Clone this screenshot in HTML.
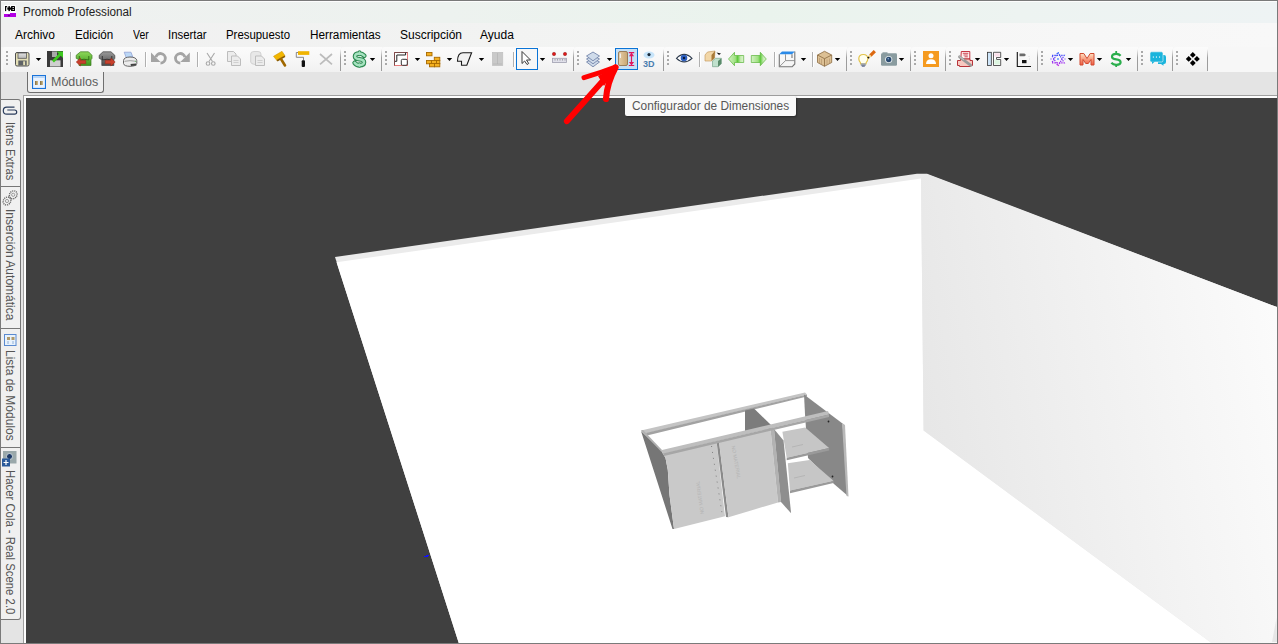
<!DOCTYPE html>
<html><head><meta charset="utf-8">
<style>
html,body{margin:0;padding:0}
body{width:1278px;height:644px;overflow:hidden;position:relative;background:#f7f7f7;font-family:"Liberation Sans",sans-serif;}
.a{position:absolute}
.t12{font-size:12px;line-height:12px;white-space:nowrap;color:#000}
.band{position:absolute;top:47px;height:25px;background:linear-gradient(#fbfbfb,#f6f6f6 60%,#f1f1f1);border-top-left-radius:3px}
.band:after{content:"";position:absolute;right:0;top:2px;width:1px;height:22px;background:linear-gradient(rgba(150,150,150,0),#9c9c9c 40%,#9c9c9c)}
.grip{position:absolute;top:4px;left:3px;width:2px;height:14px;background:repeating-linear-gradient(#a9a9a9 0 2px,transparent 2px 4px)}
.sep{position:absolute;top:52px;width:1px;height:15px;background:#b4b4b4}
.dd{position:absolute;top:58px;width:0;height:0;border-left:2.5px solid transparent;border-right:2.5px solid transparent;border-top:3px solid #000}
.ic{position:absolute;top:51px;width:16px;height:16px}
.vt{position:absolute;left:1px;width:20px;background:#f0f0f0;border:1px solid #767676;border-left:none;box-sizing:border-box}
.vtx{position:absolute;font-size:12px;line-height:12px;color:#555;white-space:nowrap;transform-origin:0 0}
</style></head><body>

<!-- title bar -->
<div class="a" style="left:1px;top:1px;width:1276px;height:22px;background:linear-gradient(90deg,#eff1f0,#edf2ef 35%,#eaf3ed 60%,#edf3f1 80%,#eef3f4 100%)"></div>
<div class="a" style="left:1px;top:1px;width:1276px;height:1px;background:#fdfdfd"></div>
<!-- app icon -->
<svg class="a" style="left:0;top:0" width="20" height="20" viewBox="0 0 20 20">
<rect x="4" y="5" width="12" height="12" fill="#fff"/>
<g fill="#000">
<rect x="5" y="6.1" width="1.2" height="5"/><rect x="5" y="6.1" width="2.2" height="1.1"/>
<rect x="7.3" y="7.5" width="3.8" height="2.2"/><rect x="8.4" y="6.1" width="1.5" height="5"/>
<rect x="11" y="6.1" width="4" height="4.9" rx=".6"/>
</g>
<rect x="12.6" y="7" width="1.2" height="1" fill="#fff"/><rect x="12.6" y="9" width="1.2" height="1" fill="#fff"/>
<path d="M4 13.9 H10 V12.9 H16 V17 H4 Z" fill="#b400e6"/>
<ellipse cx="9" cy="15.6" rx="1.3" ry=".8" fill="#6a0090"/>
</svg>
<div class="a t12" style="left:23px;top:6px;color:#222;transform:scaleX(0.975);transform-origin:0 0">Promob Professional</div>

<!-- menu -->
<div class="a" style="left:1px;top:23px;width:1276px;height:24px;background:linear-gradient(90deg,#f0f0f0,#f2f3f2 40%,#f7f7f7 85%,#f8f8f8)"></div>
<div class="a t12" style="left:15px;top:29px">Archivo</div>
<div class="a t12" style="left:75px;top:29px;transform:scaleX(0.97);transform-origin:0 0">Edición</div>
<div class="a t12" style="left:133px;top:29px;transform:scaleX(0.87);transform-origin:0 0">Ver</div>
<div class="a t12" style="left:168px;top:29px;transform:scaleX(0.95);transform-origin:0 0">Insertar</div>
<div class="a t12" style="left:226px;top:29px;transform:scaleX(0.95);transform-origin:0 0">Presupuesto</div>
<div class="a t12" style="left:310px;top:29px;transform:scaleX(0.98);transform-origin:0 0">Herramientas</div>
<div class="a t12" style="left:400px;top:29px">Suscripción</div>
<div class="a t12" style="left:480px;top:29px">Ayuda</div>

<!-- toolbar bands -->
<div class="band" style="left:3px;width:338px"><div class="grip"></div></div>
<div class="band" style="left:341px;width:41px"><div class="grip"></div></div>
<div class="band" style="left:382px;width:192px"><div class="grip"></div></div>
<div class="band" style="left:574px;width:90px"><div class="grip"></div></div>
<div class="band" style="left:664px;width:183px"><div class="grip"></div></div>
<div class="band" style="left:847px;width:64px"><div class="grip"></div></div>
<div class="band" style="left:911px;width:35px"><div class="grip"></div></div>
<div class="band" style="left:946px;width:92px"><div class="grip"></div></div>
<div class="band" style="left:1038px;width:100px"><div class="grip"></div></div>
<div class="band" style="left:1138px;width:35px"><div class="grip"></div></div>
<div class="band" style="left:1173px;width:35px"><div class="grip"></div></div>

<!-- toolbar icons -->
<svg class="a" style="left:0;top:0" width="1278" height="95" viewBox="0 0 1278 95">
<defs>
<linearGradient id="gGreen" x1="0" y1="0" x2="0" y2="1"><stop offset="0" stop-color="#8ed85a"/><stop offset="1" stop-color="#3c9a1c"/></linearGradient>
<linearGradient id="gGray" x1="0" y1="0" x2="0" y2="1"><stop offset="0" stop-color="#9a9a9a"/><stop offset="1" stop-color="#4a4a4a"/></linearGradient>
<linearGradient id="gDoor" x1="0" y1="0" x2="1" y2="0"><stop offset="0" stop-color="#e6cda6"/><stop offset="1" stop-color="#c9a774"/></linearGradient>
<linearGradient id="gArrG" x1="0" y1="0" x2="1" y2="0"><stop offset="0" stop-color="#d4f2c4"/><stop offset=".45" stop-color="#9ee080"/><stop offset=".6" stop-color="#5cc83a"/><stop offset=".8" stop-color="#c4ecb0"/><stop offset="1" stop-color="#dcf4d0"/></linearGradient>
<linearGradient id="gM" x1="0" y1="0" x2="0" y2="1"><stop offset="0" stop-color="#ffe0c0"/><stop offset="1" stop-color="#f05a40"/></linearGradient>
<linearGradient id="gLbl" x1="0" y1="0" x2="0" y2="1"><stop offset="0" stop-color="#e2e2e2"/><stop offset="1" stop-color="#b8b8b8"/></linearGradient>
</defs>
<!-- dropdown arrows -->
<g fill="#000">
<path d="M35.8 58h5.4l-2.7 3z"/><path d="M369.8 58h5.4l-2.7 3z"/><path d="M414.8 58h5.4l-2.7 3z"/>
<path d="M446.8 58h5.4l-2.7 3z"/><path d="M478.8 58h5.4l-2.7 3z"/><path d="M539.8 58h5.4l-2.7 3z"/>
<path d="M606.8 58h5.4l-2.7 3z"/><path d="M800.8 58h5.4l-2.7 3z"/><path d="M834.8 58h5.4l-2.7 3z"/>
<path d="M898.8 58h5.4l-2.7 3z"/><path d="M974.8 58h5.4l-2.7 3z"/><path d="M1003.8 58h5.4l-2.7 3z"/>
<path d="M1067.8 58h5.4l-2.7 3z"/><path d="M1096.8 58h5.4l-2.7 3z"/><path d="M1125.8 58h5.4l-2.7 3z"/>
</g>
<!-- separators -->
<g fill="#ffffff">
<rect x="71" y="52" width="1" height="15"/><rect x="146" y="52" width="1" height="15"/><rect x="198" y="52" width="1" height="15"/>
<rect x="514" y="52" width="1" height="15"/><rect x="700" y="52" width="1" height="15"/><rect x="775" y="52" width="1" height="15"/>
<rect x="813" y="52" width="1" height="15"/>
</g>
<g fill="#b0b0b0">
<rect x="70" y="52" width="1" height="15"/><rect x="145" y="52" width="1" height="15"/><rect x="197" y="52" width="1" height="15"/>
<rect x="513" y="52" width="1" height="15"/><rect x="699" y="52" width="1" height="15"/><rect x="774" y="52" width="1" height="15"/>
<rect x="812" y="52" width="1" height="15"/>
</g>

<!-- save -->
<rect x="15.5" y="52.5" width="13.5" height="13.5" rx="1.5" fill="#e4dfb6" stroke="#505050" stroke-width="1"/>
<rect x="18" y="53" width="8.5" height="5.3" fill="url(#gLbl)" stroke="#5a5a5a" stroke-width=".8"/>
<rect x="18.3" y="60.5" width="8.4" height="5" fill="#5e6266"/>
<rect x="23.2" y="61.3" width="1.9" height="3.8" fill="#e4dfb6"/>
<!-- save as -->
<rect x="47" y="51" width="16" height="16" fill="#3a3a3a"/>
<rect x="52" y="51.5" width="5" height="5.5" fill="#a8a8a8"/>
<rect x="50" y="60.3" width="10.5" height="6.2" fill="#cfcfcf"/>
<path d="M53 61.5 L60.5 54" stroke="#3cc81e" stroke-width="2.6"/>
<path d="M56.5 51.5 L63 51.5 L63 58 Z" fill="#3cc81e"/>
<!-- green chair -->
<path d="M80.5 51.8 L88.5 51.8 L92 55.3 L92 58.3 L91 59.8 L91 65.5 L79 65.5 L79 59.8 L76.2 58.3 L76.2 55.3 Z" fill="url(#gGreen)" stroke="#3d7a22" stroke-width=".7" stroke-linejoin="round"/>
<path d="M79.3 56 L79.3 60 M88.8 56 L88.8 60 M79.3 60 Q84 58.5 88.8 60" stroke="#2e6a16" stroke-width=".9" fill="none"/>
<path d="M76.2 62 L80.5 58 L80.5 60.3 L85.8 60.3 L85.8 63.7 L80.5 63.7 L80.5 66 Z" fill="#c8402c" stroke="#9a2a1a" stroke-width=".5"/>
<!-- gray chair -->
<path d="M103 51.8 L111 51.8 L114.8 55.3 L114.8 58.3 L113.8 59.8 L113.8 65.5 L101.8 65.5 L101.8 59.8 L99.2 58.3 L99.2 55.3 Z" fill="url(#gGray)" stroke="#404040" stroke-width=".7" stroke-linejoin="round"/>
<path d="M102.3 56 L102.3 60 M111.8 56 L111.8 60 M102.3 60 Q107 58.5 111.8 60" stroke="#303030" stroke-width=".9" fill="none"/>
<path d="M115.2 62 L110.8 58 L110.8 60.3 L105.2 60.3 L105.2 63.7 L110.8 63.7 L110.8 66 Z" fill="#c8402c" stroke="#9a2a1a" stroke-width=".5"/>
<!-- printer -->
<path d="M124.2 52.2 L131 52.2 L132.8 57 L126.2 57.6 Z" fill="#bcd8f6" stroke="#8a9ad0" stroke-width=".7"/>
<path d="M123.5 60.5 Q123.8 57.2 130 57 Q136.5 57.2 136.8 60.5 L136.8 63.5 Q136 66.3 130 66.3 Q124 66.3 123.5 63.5 Z" fill="#ececec" stroke="#666" stroke-width="1"/>
<path d="M124.5 61.3 Q130 60 136 61.3" stroke="#8a8a8a" stroke-width=".8" fill="none"/>
<path d="M130.5 64 L136 63.5 L136.5 65.5 L131 66 Z" fill="#444"/>
<circle cx="135.5" cy="61.2" r=".5" fill="#5ac85a"/>
<!-- undo -->
<path d="M155.8 57.3 A4.8 4.8 0 1 1 160.5 63.1" stroke="#a4a4a4" stroke-width="2.8" fill="none"/>
<path d="M151 52.5 L151 62 L160.5 62 Z" fill="#a4a4a4"/>
<!-- redo -->
<path d="M185 57.3 A4.8 4.8 0 1 0 180.3 63.1" stroke="#a4a4a4" stroke-width="2.8" fill="none"/>
<path d="M189.8 52.5 L189.8 62 L180.3 62 Z" fill="#a4a4a4"/>
<!-- scissors -->
<path d="M207 53 L212.5 61.5 M214.5 53 L209 61.5" stroke="#a8a8a8" stroke-width="1.1"/>
<circle cx="208" cy="63.5" r="1.8" fill="none" stroke="#a8a8a8" stroke-width="1.1"/>
<circle cx="213.3" cy="63.5" r="1.8" fill="none" stroke="#a8a8a8" stroke-width="1.1"/>
<!-- copy -->
<path d="M227.5 51.5 L233.5 51.5 L236 54 L236 61.5 L227.5 61.5 Z" fill="#ececec" stroke="#bdbdbd" stroke-width="1"/>
<path d="M231.5 56 L237.5 56 L240.5 59 L240.5 65.5 L231.5 65.5 Z" fill="#ececec" stroke="#bdbdbd" stroke-width="1"/>
<path d="M233.5 60.5h5M233.5 62.5h5" stroke="#c4c4c4" stroke-width=".7"/>
<!-- paste -->
<path d="M250.7 54 Q250.7 51.5 254 51.5 L258 51.5 Q261 51.5 261 54 L261 62 Q260 64.5 255 64.5 Q250.7 64 250.7 62 Z" fill="#e8e8e8" stroke="#cacaca" stroke-width=".8"/>
<path d="M255.5 56 L261.5 56 L264.5 59 L264.5 65.5 L255.5 65.5 Z" fill="#ececec" stroke="#bdbdbd" stroke-width="1"/>
<path d="M257.5 60.5h5M257.5 62.5h5" stroke="#c4c4c4" stroke-width=".7"/>
<!-- brush -->
<path d="M273.5 56.3 L282 51.3 L285 55.7 L276.7 60.3 Z" fill="#f2b600" stroke="#c89000" stroke-width=".5"/>
<path d="M276.5 60 L284.8 55.5 L285.3 57 L277.5 61.5 Z" fill="#8a5a00"/>
<path d="M281 59 L285 65.5" stroke="#a06800" stroke-width="2.6" stroke-linecap="round"/>
<!-- roller -->
<rect x="298" y="51.2" width="11.3" height="3.7" fill="#f0b400"/>
<path d="M298 52.5 L296.3 52.5 L296.3 57.3 L303.5 57.3 L303.5 60.5" stroke="#7a7a7a" stroke-width=".9" fill="none"/>
<rect x="301.7" y="60.3" width="3.3" height="6.7" rx="1" fill="#111"/>
<!-- X -->
<path d="M320 54 L332 64.3 M332 54 L320 64.3" stroke="#bcbcbc" stroke-width="1.7"/>
<!-- $ green mint -->
<g fill="none" stroke-linecap="round">
<path d="M359.5 52v2.5M359.5 64v2" stroke="#2e8a52" stroke-width="3.6"/>
<path d="M364.3 55.8 Q362.3 53.5 359.5 53.5 Q355 53.5 355 56.6 Q355 58.8 359.5 59.3 Q364 59.8 364 62.3 Q364 65.2 359.5 65.2 Q356.3 65.2 354.6 62.8" stroke="#2e8a52" stroke-width="4.6"/>
<path d="M359.5 52v2.5M359.5 64v2" stroke="#a6e3c0" stroke-width="1.6"/>
<path d="M364.3 55.8 Q362.3 53.5 359.5 53.5 Q355 53.5 355 56.6 Q355 58.8 359.5 59.3 Q364 59.8 364 62.3 Q364 65.2 359.5 65.2 Q356.3 65.2 354.6 62.8" stroke="#a6e3c0" stroke-width="2.4"/>
</g>
<!-- room -->
<rect x="394.5" y="52.5" width="13" height="13" fill="#fff" stroke="#e87a7a" stroke-width="1"/>
<path d="M394.5 65.5 L394.5 52.5 L407.5 52.5" stroke="#7a4a4a" stroke-width="1" fill="none"/>
<path d="M395 61.3 L396.8 61.3 L396.8 55 L405.6 55 L405.6 52.8" stroke="#222" stroke-width="1" fill="none"/>
<rect x="401.3" y="59.3" width="6" height="6" rx="1.2" fill="#fff" stroke="#333" stroke-width="1"/>
<!-- bricks -->
<g fill="#f4b020" stroke="#a86a00" stroke-width=".9">
<rect x="426.5" y="52.5" width="5.5" height="3.3"/>
<rect x="434.3" y="57.3" width="5.5" height="3.3"/>
<rect x="426.5" y="60.5" width="5.5" height="3.3"/><rect x="431.5" y="60.5" width="5" height="3.3"/><rect x="436.5" y="60.5" width="3.3" height="3.3"/>
<rect x="429.5" y="63.5" width="5" height="3.3"/><rect x="434.5" y="63.5" width="5.3" height="3.3"/>
</g>
<!-- shape -->
<path d="M457.5 61.3 Q457.5 52.7 463 52.7 L471.6 52.7 L466.8 65.3 L461.5 65.3 L461.5 61.3 Z" fill="#f2f2f2" stroke="#1a1a1a" stroke-width="1.1"/>
<!-- gray cabinet -->
<rect x="492.3" y="52.3" width="10.5" height="13.3" fill="#c9c9c9" stroke="#bdbdbd" stroke-width=".6"/>
<path d="M497.5 53v11M493 64h9" stroke="#b0b0b0" stroke-width=".6"/>
<!-- select button -->
<rect x="516.5" y="48.5" width="21" height="21" fill="#f7f7f7" stroke="#0a74d6" stroke-width="1"/>
<path d="M522 51.5 L522 63.5 L524.6 61 L527 64.5 L528.7 63.5 L526.5 60 L530.5 60 Z" fill="#fff" stroke="#3a3a3a" stroke-width="1" stroke-linejoin="round"/>
<!-- ruler -->
<circle cx="554" cy="54" r="1.7" fill="#e01818" stroke="#7a1010" stroke-width=".4"/>
<circle cx="565" cy="54" r="1.7" fill="#e01818" stroke="#7a1010" stroke-width=".4"/>
<rect x="552.5" y="58.3" width="14" height="4.2" fill="#e0e0ea" stroke="#a0a0b0" stroke-width=".8"/>
<path d="M555 59.5v.8M557.5 59.5v.8M560 59.5v.8M562.5 59.5v.8M565 59.5v.8" stroke="#333" stroke-width=".7"/>
<!-- layers -->
<g stroke="#7486aa" stroke-width=".9" fill="#cfdbea">
<path d="M586.5 62 L593 58.5 L599.5 62 L593 66.8 Z"/>
<path d="M586.5 59 L593 55.5 L599.5 59 L593 63.8 Z"/>
<path d="M586.5 56 L593 52 L599.5 56 L593 60.8 Z"/>
</g>
<!-- highlighted button -->
<rect x="615.5" y="48.5" width="22" height="21" fill="#c6e0f6" stroke="#0a74d6" stroke-width="1"/>
<rect x="618.5" y="51.5" width="9" height="14" rx="1.5" fill="url(#gDoor)" stroke="#8a6a42" stroke-width=".8"/>
<rect x="619.8" y="53.5" width="1.1" height="4.5" fill="#f4f4f4"/>
<path d="M631.5 52.8v12.5M628.8 52.6h5.4M628.8 65.5h5.4" stroke="#e01860" stroke-width="1.2"/>
<path d="M628.9 56.2 L631.5 52.8 L634.1 56.2 Z M628.9 61.9 L631.5 65.3 L634.1 61.9 Z" fill="#e01860"/>
<!-- 3D -->
<ellipse cx="649" cy="55" rx="5.5" ry="3.5" fill="#c6e4fa"/>
<circle cx="649" cy="54.6" r="1.6" fill="#1a2a3a"/>
<text x="648.8" y="66.5" font-family="Liberation Sans" font-weight="bold" font-size="9" text-anchor="middle" fill="#4a7eb0">3D</text>
<!-- eye -->
<path d="M676.5 58.3 Q684 50.5 692 58.3 Q684 65.5 676.5 58.3 Z" fill="#fff" stroke="#2d3a4c" stroke-width="1.1"/>
<circle cx="684" cy="58" r="3.3" fill="#2e60c0"/>
<circle cx="684" cy="58" r="1.2" fill="#0a1a3a"/>
<!-- cubes -->
<path d="M705 55 L707.5 52 L715 51 L714.5 58 L711.5 61 L705 61 Z" fill="#f2d7a8" stroke="#c09050" stroke-width=".6"/>
<path d="M711.5 55 L715 51 L714.5 58 L711.5 61 Z" fill="#a87a38"/>
<path d="M712.5 61 L715.5 58.3 L721.3 58.3 L721.3 63.8 L718 66.7 L712.5 66.7 Z" fill="#bfe0cc" stroke="#6a9a80" stroke-width=".6"/>
<path d="M718 61 L721.3 58.3 L721.3 63.8 L718 66.7 Z" fill="#5a8a6a"/>
<path d="M716.5 52.5 L719 55 L721 53.5 Z" fill="#111"/>
<!-- left arrow green -->
<path d="M728.5 59 L734.5 52.3 L734.5 55.5 L743.7 55.5 L743.7 62.5 L734.5 62.5 L734.5 65.7 Z" fill="url(#gArrG)" stroke="#5ab43a" stroke-width=".7"/>
<!-- right arrow green -->
<path d="M766.3 59 L760.3 52.3 L760.3 55.5 L751.3 55.5 L751.3 62.5 L760.3 62.5 L760.3 65.7 Z" fill="url(#gArrG)" stroke="#5ab43a" stroke-width=".7"/>
<!-- wire cube -->
<path d="M782 51.5 L794.8 51.5 L792 54.3 L779.3 54.3 Z" fill="#2a8ae8"/>
<g stroke="#767676" stroke-width="1.1" fill="none" stroke-linejoin="round">
<path d="M779.3 54.3 L779.3 66.8 L792 66.8 L794.8 64 L794.8 51.5"/>
<path d="M792 54.3 L792 58"/>
<path d="M785.5 54.3 L785.5 60.6 L794.8 60.6 M785.5 60.6 L779.3 66.8" stroke="#8a8a8a" stroke-width=".9"/>
</g>
<!-- wooden box -->
<path d="M817.5 55 L824.5 51.3 L831.7 55 L831.7 62.5 L824.5 66.3 L817.5 62.5 Z" fill="#dcc094" stroke="#8a6a40" stroke-width=".8"/>
<path d="M817.5 55 L824.5 58.7 L831.7 55 M824.5 58.7 L824.5 66.3" stroke="#8a6a40" stroke-width=".8" fill="none"/>
<path d="M819.5 58v5M821.5 59v5M827 59.5v5M829.5 58.5v5" stroke="#a88660" stroke-width=".5"/>
<!-- bulb -->
<path d="M863.3 54.5 Q867.8 54.5 867.8 58.8 Q867.8 61 866.2 62.6 L866 64 L860.6 64 L860.4 62.6 Q858.8 61 858.8 58.8 Q858.8 54.5 863.3 54.5 Z" fill="#fffff0" stroke="#e2c34a" stroke-width="1.2"/>
<rect x="860.8" y="63.3" width="5" height="2.6" fill="#9aa0a8"/>
<rect x="861.8" y="65.6" width="3" height="1" fill="#3a4a7a"/>
<path d="M870.3 55.7 L874.8 51.2" stroke="#dc6810" stroke-width="3.2"/>
<path d="M868.4 57.6 L870.6 55.4" stroke="#f4d890" stroke-width="2.4"/>
<path d="M867.9 58.1 L868.9 57.1" stroke="#111" stroke-width="2"/>
<!-- camera -->
<rect x="881" y="53.3" width="16" height="12.4" rx="1.3" fill="#8a9ca0"/>
<rect x="882.5" y="52.3" width="5" height="2" fill="#8a9ca0"/>
<circle cx="888.7" cy="59.5" r="3.6" fill="#e8eef0"/>
<circle cx="888.7" cy="59.5" r="2.7" fill="#2a4a70"/>
<circle cx="888.2" cy="58.8" r=".7" fill="#9ac0e8"/>
<!-- orange user -->
<rect x="923" y="51" width="16" height="16" fill="#f59a1f"/>
<circle cx="931" cy="55.8" r="2.5" fill="#fff"/>
<path d="M926 64 Q926 59.5 931 59.3 Q936 59.5 936 64 Z" fill="#fff"/>
<!-- red printer wrench -->
<path d="M961.3 51.5 L969.8 51.5 L969.8 59 L960.8 59 Z" fill="#fff0f0" stroke="#c02030" stroke-width=".9"/>
<path d="M962.8 53.3h5.5M963.5 55h4.3M964.5 56.8h3.3" stroke="#c02030" stroke-width=".8"/>
<path d="M957.5 60.5 L960.5 60.5 L960.5 59 L970 59 L970 60.5 L972.5 60.5 L972.5 65.5 L970.5 65.5 L970.5 66.5 L959.5 66.5 L959.5 65.5 L957.5 65.5 Z" fill="#f8c8c0" stroke="#b02028" stroke-width=".9"/>
<path d="M959.5 56.8 L970.8 65.3" stroke="#9a9a9a" stroke-width="2.8" stroke-linecap="round"/>
<path d="M959.5 56.5 L964 60" stroke="#c8c8c8" stroke-width="1"/>
<!-- layout -->
<rect x="987.5" y="52.3" width="3.8" height="13.2" fill="#cfe6fa" stroke="#333" stroke-width=".8"/>
<path d="M993.5 52.3 L1000.7 52.3 L1000.7 57.5 L996.5 57.5 L996.5 59.5 L1000.7 59.5 L1000.7 65.5 L993.5 65.5 Z" fill="#fff" stroke="#333" stroke-width=".8"/>
<rect x="994.4" y="53.2" width="5.4" height="3.4" fill="#fbe0ea"/>
<path d="M994.4 59.5 L996.5 59.5 L996.5 60.3 L999.8 60.3 L999.8 64.6 L994.4 64.6 Z" fill="#dcf6e0"/>
<!-- report -->
<path d="M1017.3 52 L1017.3 66.5 L1031 66.5" stroke="#111" stroke-width="1.1" fill="none"/>
<path d="M1019.5 53.5 L1024.5 53.5 L1026 55 L1024.5 56.3 L1019.5 56.3 Z" fill="#6a6a6a"/>
<rect x="1022" y="60" width="4.5" height="3.2" fill="#111"/>
<path d="M1029 56v1M1029 59h1" stroke="#bbb" stroke-width=".5"/>
<!-- atom -->
<linearGradient id="gAtom" gradientUnits="userSpaceOnUse" x1="0" y1="52" x2="0" y2="66"><stop offset="0" stop-color="#1a5cff"/><stop offset=".5" stop-color="#7a40f8"/><stop offset="1" stop-color="#c020e8"/></linearGradient>
<g fill="none" stroke="url(#gAtom)" stroke-width="1.25" stroke-dasharray="1.4 .9">
<path d="M1058 52.3 L1064.2 62.8 L1051.8 62.8 Z"/>
<path d="M1058 65.9 L1064.2 55.4 L1051.8 55.4 Z"/>
</g>
<rect x="1057" y="58" width="2" height="2" fill="#8ab0f8"/>
<path d="M1051 58v2M1065 58v2" stroke="#b090f8" stroke-width="1"/>
<!-- M -->
<path d="M1080 65 L1080 53.5 L1083.8 53.5 L1087 58.5 L1090.2 53.5 L1094 53.5 L1094 65 L1091 65 L1091 59.5 L1088.3 63.5 L1085.7 63.5 L1083 59.5 L1083 65 Z" fill="url(#gM)" stroke="#d04a30" stroke-width="1" stroke-linejoin="round"/>
<!-- green dollar -->
<g fill="none" stroke="#2aae4c" stroke-linecap="butt">
<path d="M1116.2 51v2.8M1116.2 64.5v2.6" stroke-width="1.8"/>
<path d="M1120.6 55.8 Q1119 53.8 1116.2 53.8 Q1112 53.8 1112 56.7 Q1112 58.8 1116.2 59.3 Q1120.6 59.8 1120.6 62.3 Q1120.6 64.8 1116.2 64.8 Q1113 64.8 1111.4 62.8" stroke-width="2.2"/>
</g>
<!-- chat -->
<path d="M1158 55 L1164 55 Q1166 55 1166 57 L1166 62 Q1166 64 1164 64 L1163.5 64 L1163.5 65.7 L1161 64 L1158 64 Z" fill="#1ab4dc"/>
<rect x="1150" y="51.8" width="13" height="10.2" rx="1.5" fill="#1ab4dc" stroke="#f7f7f7" stroke-width=".6"/>
<path d="M1152 61.5 L1152 64 L1155 61.5 Z" fill="#1ab4dc"/>
<g fill="#fff"><rect x="1152.8" y="56.5" width="1.1" height="1.1"/><rect x="1155.9" y="56.5" width="1.1" height="1.1"/><rect x="1159" y="56.5" width="1.1" height="1.1"/></g>
<!-- diamonds -->
<g fill="#000">
<path d="M1192.8 52 L1195.7 54.9 L1192.8 57.8 L1189.9 54.9 Z"/>
<path d="M1188.7 56 L1191.6 58.9 L1188.7 61.8 L1185.8 58.9 Z"/>
<path d="M1196.9 56 L1199.8 58.9 L1196.9 61.8 L1194 58.9 Z"/>
<path d="M1192.8 60.1 L1195.7 63 L1192.8 65.9 L1189.9 63 Z"/>
</g>
</svg>


<!-- tab row -->
<div class="a" style="left:1px;top:72px;width:1276px;height:23px;background:#e4e4e4"></div>
<div class="a" style="left:27px;top:72px;width:77px;height:21px;background:#efefef;border:1px solid #6f6f6f;border-top:none;box-sizing:border-box;border-radius:0 0 3px 3px"></div>
<svg class="a" style="left:32px;top:75px" width="14" height="14" viewBox="0 0 14 14">
<rect x="0.5" y="0.5" width="13" height="13" fill="#eaf3ff" stroke="#1a73d9" stroke-width="1.2"/>
<rect x="1" y="1" width="12" height="2" fill="#b9d6f6"/>
<path d="M3 6h3v4h-3z M8 6h3v4h-3z" fill="#c9b27f"/>
<path d="M3 6h1.5v4h-1.5z M8 6h1.5v4h-1.5z" fill="#8f7a4c"/>
</svg>
<div class="a" style="left:51px;top:76px;font-size:12.5px;line-height:12px;color:#5e5e5e;white-space:nowrap">Módulos</div>

<!-- left strip -->
<div class="a" style="left:1px;top:95px;width:22px;height:548px;background:#e4e4e4"></div>
<div class="vt" style="top:99px;height:88px;border-top-right-radius:3px"></div>
<div class="vt" style="top:186px;height:143px"></div>
<div class="vt" style="top:328px;height:120px"></div>
<div class="vt" style="top:447px;height:173px;border-bottom-right-radius:3px"></div>


<!-- vertical tab contents -->
<svg class="a" style="left:0;top:95px" width="23" height="548" viewBox="0 95 23 548">
<path d="M14.5 107.2 H6.8 A3.5 3.5 0 0 0 6.8 114.2 H14.6 A2.1 2.1 0 0 0 14.6 110 H7.3" fill="none" stroke="#2a3c5c" stroke-width="1.2"/>
<g fill="none" stroke="#6a6a6a" stroke-width="1.4" stroke-dasharray="1.2 .8">
<ellipse cx="7" cy="201" rx="3.6" ry="4.2" transform="rotate(40 7 201)"/><ellipse cx="13.2" cy="194.8" rx="3.6" ry="4.2" transform="rotate(40 13.2 194.8)"/>
</g>
<g fill="none" stroke="#8a8a8a" stroke-width=".8">
<circle cx="7" cy="201" r="1.6"/><circle cx="13.2" cy="194.8" r="1.6"/></g>
<rect x="4.5" y="334.5" width="11.5" height="11" fill="#e8f2fc" stroke="#5a8ad0" stroke-width="1"/>
<path d="M7 337h3v3h-3z M11.5 337h3v3h-3z" fill="#b09a6a"/>
<path d="M8 341v3M13 341v3" stroke="#7aa0d0" stroke-width=".8"/>
<rect x="3" y="451" width="13.5" height="12.5" fill="#9aa8aa"/>
<circle cx="9.5" cy="456.5" r="3" fill="#1e3a66" stroke="#e0e8ee" stroke-width=".8"/>
<rect x="2" y="458.5" width="8" height="8" fill="#2a5a9a"/>
<path d="M6 460v5M3.5 462.5h5" stroke="#fff" stroke-width="1.2"/>
</svg>
<div class="vtx" style="left:16px;top:122.3px;transform:rotate(90deg) scaleX(0.918)">Itens Extras</div>
<div class="vtx" style="left:16px;top:209.2px;transform:rotate(90deg) scaleX(1.0)">Inserción Automática</div>
<div class="vtx" style="left:16px;top:350px;transform:rotate(90deg) scaleX(1.0)">Lista de Módulos</div>
<div class="vtx" style="left:16px;top:470.3px;transform:rotate(90deg) scaleX(0.945)">Hacer Cola - Real Scene 2.0</div>

<!-- viewport frame -->
<div class="a" style="left:23px;top:95px;width:1254px;height:1px;background:#a0a0a0"></div>
<div class="a" style="left:23px;top:95px;width:1px;height:548px;background:#a0a0a0"></div>
<div class="a" style="left:24px;top:96px;width:1253px;height:2px;background:#fdfdfd"></div>
<div class="a" style="left:24px;top:96px;width:2px;height:547px;background:#fdfdfd"></div>

<!-- 3D scene -->
<svg class="a" style="left:0;top:0" width="1278" height="644" viewBox="0 0 1278 644">
<defs>
<clipPath id="vp"><rect x="26" y="98" width="1251" height="545"/></clipPath>
<linearGradient id="wall" gradientUnits="userSpaceOnUse" x1="922" y1="400" x2="1278" y2="330">
<stop offset="0" stop-color="#e7e7e7"/><stop offset="1" stop-color="#fbfbfb"/>
</linearGradient>
</defs>
<g clip-path="url(#vp)">
<rect x="26" y="98" width="1251" height="545" fill="#404040"/>
<polygon points="335,257 917,173.7 927,173.7 1290,312 1290,650 461,650" fill="#ebebeb"/>
<polygon points="336.5,262.3 921,178.6 923.6,430.5 1221,650 461,650" fill="#ffffff"/>
<polygon points="921,178.5 927,174.2 1290,312 1290,650 1221,650 923.6,430.5" fill="url(#wall)"/>
<path d="M424 556.5h4M426 555.5h3" stroke="#1010ff" stroke-width="1"/>
<polygon points="1276.5,618 1277,642 1272,642" fill="#e6e6e6"/>
<g id="cabinet" stroke-linejoin="round">
<!-- back rail -->
<polygon points="641,430.4 805,392.6 807,394.5 646,433.5" fill="#c4c4c4"/>
<polygon points="646,433 807,394.5 807,396.5 647,435.5" fill="#a2a2a2"/>
<!-- right side panel inner face -->
<polygon points="804,394.5 842.5,423.5 848,496 834,484 808,458 805,414" fill="#888888"/>
<polygon points="842,423 845,425 848.5,496.5 846.5,496" fill="#b8b8b8"/>
<!-- divider back top -->
<polygon points="745,410.5 754,408.5 771,425 771,429 745,432" fill="#7c7c7c"/>
<!-- shelf 1 -->
<polygon points="782.4,431.7 805.2,427.4 829.1,448 786.7,457.8" fill="#c6c6c6"/>
<polygon points="786.7,457.8 829.1,448 829.1,450.5 786.7,460.3" fill="#9a9a9a"/>
<!-- shelf 2 -->
<polygon points="787.8,463.3 809.6,460 833.5,480.7 790,490.4" fill="#c6c6c6"/>
<polygon points="790,490.4 833.5,480.7 833.5,483 790,493.2" fill="#9a9a9a"/>
<path d="M792 447 L803 444.5 M794 478 L805 475.5" stroke="#b0b0b0" stroke-width=".8"/>
<!-- left side panel -->
<polygon points="641,431 661,450.3 665.5,458 667.8,470 669.5,495 674,529 672.5,529" fill="#767676"/>
<polygon points="641,430.4 643,430 662,450 661,451.5" fill="#b0b0b0"/>
<!-- door 1 -->
<polygon points="663.1,453.4 716.6,441.9 725,516.3 674,529 669.5,495 667.8,470 665.5,458" fill="#c9c9c9"/>
<!-- door gap -->
<polygon points="716.6,442 719,441.5 728.5,517.3 726,517" fill="#8a8a8a"/>
<!-- door 2 -->
<polygon points="719,441.9 770.4,428.5 778,502.4 728.5,517.3" fill="#c9c9c9"/>
<!-- divider front -->
<polygon points="770.4,428.5 774,429 781,502 778,502.4" fill="#b2b2b2"/>
<polygon points="774,429 783.5,440.4 791.1,513.3 781,502" fill="#8e8e8e"/>
<!-- front rail -->
<polygon points="661,450.3 828,411 829,414.5 663,454" fill="#bebebe"/>
<polygon points="663,453.5 829,414.5 829,417 664,456" fill="#a6a6a6"/>
<!-- dotted hinge line -->
<path d="M711.5 446 L722 513" stroke="#777" stroke-width=".9" stroke-dasharray="1 5"/>
<circle cx="828.5" cy="421.5" r=".9" fill="#222"/>
<circle cx="832.5" cy="476.5" r=".9" fill="#222"/>
<!-- labels -->
<text x="0" y="0" font-family="Liberation Sans" font-size="5" fill="#b4b4b4" transform="translate(704,514) rotate(-98)">NO MATERIAL</text>
<text x="0" y="0" font-family="Liberation Sans" font-size="5" fill="#b4b4b4" transform="translate(731.5,446) rotate(80)">NO MATERIAL</text>
</g>

</g>
</svg>

<!-- tooltip -->
<div class="a" style="left:625px;top:96px;width:171px;height:20px;background:#f9f9f9;border-radius:2px;box-shadow:1px 1px 2px rgba(0,0,0,.35)"></div>
<div class="a" style="left:632px;top:100px;font-size:12px;line-height:12px;color:#575757;white-space:nowrap;transform:scaleX(.99);transform-origin:0 0">Configurador de Dimensiones</div>

<!-- red arrow -->
<svg class="a" style="left:0;top:0" width="1278" height="644" viewBox="0 0 1278 644">
<g stroke="#ff0000" stroke-linecap="round" fill="none">
<path d="M566.8 121.3 L609 74" stroke-width="5.8"/>
<path d="M584 77.6 Q600 73 615.5 67" stroke-width="5"/>
<path d="M615.5 67.5 Q607 83 606 99" stroke-width="6.2"/>
</g>
<polygon points="598,76 617.5,65.5 604,86" fill="#ff0000"/>
</svg>
<!-- window border -->
<div class="a" style="left:0;top:0;width:1278px;height:644px;border:1px solid #7a7a7a;box-sizing:border-box"></div>
</body></html>
